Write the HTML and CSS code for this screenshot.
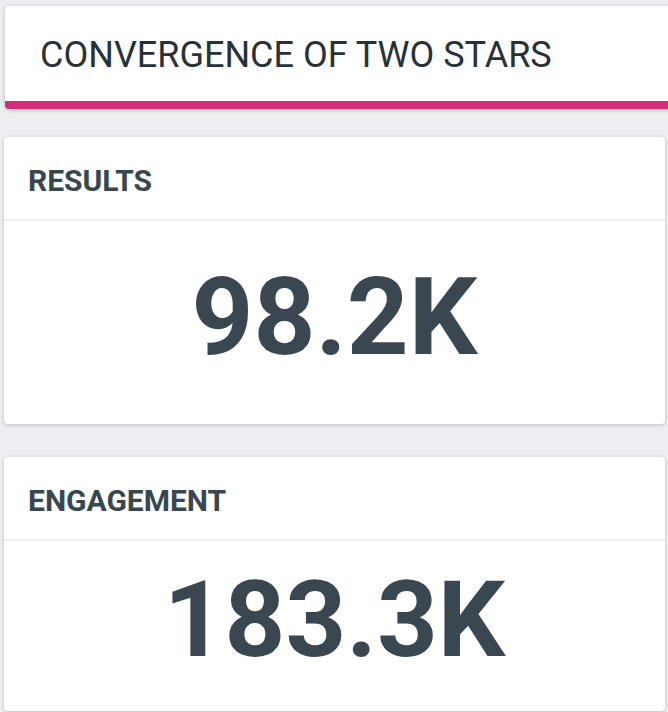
FILE: index.html
```html
<html lang="en">
<head>
    <meta charset="UTF-8">
    <meta name="viewport" content="width=device-width, initial-scale=1.0">
    <title>Convergence of Two Stars</title>
    <link rel="stylesheet" href="styles.css">
</head>
<body>
    <div class="page">
        <div class="title-card">
            <h1 class="title">CONVERGENCE OF TWO STARS</h1>
        </div>

        <div class="stat-card results">
            <div class="stat-header">RESULTS</div>
            <div class="stat-body">
                <div class="stat-value big">98.2K</div>
            </div>
        </div>

        <div class="stat-card engagement">
            <div class="stat-header">ENGAGEMENT</div>
            <div class="stat-body">
                <div class="stat-value">183.3K</div>
            </div>
        </div>
    </div>
</body>
</html>
```

FILE: styles.css
```css
body {
    margin: 0;
    font-family: Roboto, 'Liberation Sans', sans-serif;
    background-color: #edeef0;
    overflow: hidden;
}

.page {
    height: 712px;
    display: flex;
    flex-direction: column;
    padding: 6px 3px 1px 4px;
    box-sizing: border-box;
}

.title-card {
    background-color: #ffffff;
    margin: 0 -10px 0 1px;
    padding: 28px 35px 25px;
    border-bottom: 8px solid #d42d7b;
    border-radius: 4px;
    box-shadow: 0 1px 4px rgba(0, 0, 0, 0.22);
}

.title {
    margin: 0;
    font-size: 36px;
    font-weight: 400;
    color: #263238;
}

.stat-card {
    background-color: #ffffff;
    border-radius: 4px;
    box-shadow: 0 1px 4px rgba(0, 0, 0, 0.2);
    display: flex;
    flex-direction: column;
}

.results {
    margin-top: 28px;
    height: 287px;
}

.engagement {
    margin-top: 33px;
    flex: 1;
}

.stat-header {
    padding: 26px 24px 21px;
    font-size: 30px;
    font-weight: 700;
    color: #37474f;
    border-bottom: 2px solid #eeeff1;
}

.stat-body {
    flex: 1;
    display: flex;
    align-items: center;
    justify-content: center;
    padding-bottom: 12px;
}

.stat-value {
    font-size: 106px;
    font-weight: 700;
    line-height: 1;
    color: #3a4750;
}

.stat-value.big {
    font-size: 108px;
}
```
